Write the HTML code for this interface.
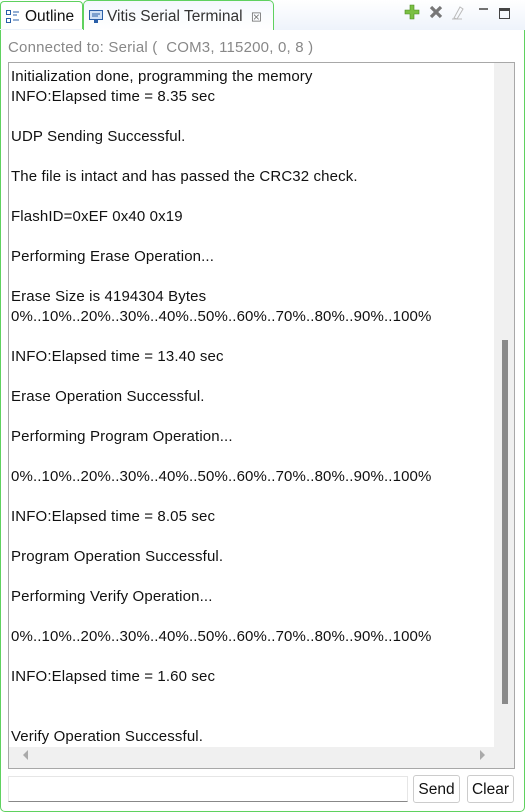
<!DOCTYPE html>
<html><head><style>
*{margin:0;padding:0;box-sizing:border-box}
body{width:525px;height:812px;background:#fff;font-family:"Liberation Sans","Noto Sans CJK SC",sans-serif;position:relative;overflow:hidden}
.frame{position:absolute;left:0;top:28px;width:525px;height:784px;border:1px solid #5fd15f;border-radius:0 0 5px 5px;background:#fff}
.tabbar{position:absolute;left:0;top:0;width:525px;height:30px;background:linear-gradient(#fff,#eef3fb)}
.tab1{position:absolute;left:0;top:1px;width:83px;height:28px;border:1px solid #5fd15f;border-bottom:none;border-radius:4px 4px 0 0;background:#fff;font-size:15.5px;color:#111;padding:6px 0 0 24px}
.tab2{position:absolute;left:83px;top:0;width:191px;height:30px;border:1px solid #5fd15f;border-bottom:none;border-radius:5px 5px 0 0;background:linear-gradient(#f4f8fd,#fff);font-size:15.5px;color:#333;padding:7px 0 0 23px}
.conn{position:absolute;left:8px;top:39px;font-size:15px;color:#888;letter-spacing:0.2px}
.box{position:absolute;left:8px;top:62px;width:507px;height:707px;border:1px solid #a8a8a8;background:#f0f0f0}
.text{position:absolute;left:0;top:0;width:485px;height:684px;background:#fff;overflow:hidden;font-size:15px;color:#111;line-height:20px;padding:4px 0 0 2px;white-space:pre;letter-spacing:0.13px}
.thumb{position:absolute;left:493px;top:277px;width:6px;height:364px;background:#8a8a8a}
.btn{position:absolute;top:775px;height:28px;border:1px solid #ccc;border-radius:3px;background:#fff;font-size:15.5px;text-align:center;line-height:27px;color:#111}
</style></head><body>
<div class="frame"></div>
<div class="tabbar"></div>
<div class="tab1">Outline
<svg style="position:absolute;left:5px;top:8px" width="14" height="14"><rect x="0.5" y="0.5" width="4" height="4" fill="none" stroke="#2a5fa8"/><rect x="0.5" y="8.5" width="4" height="4" fill="none" stroke="#2a5fa8"/><path d="M7 2h6M7 5h4M7 10h6" stroke="#2a5fa8"/></svg></div>
<div class="tab2">Vitis Serial Terminal <span style="font-size:11px;color:#666;margin-left:4px">⊠</span>
<svg style="position:absolute;left:5px;top:9px" width="14" height="14"><rect x="0.5" y="0.5" width="13" height="9" fill="#cfe0f5" stroke="#2a5fa8"/><path d="M3 4h8M3 6h6" stroke="#2a5fa8"/><rect x="5" y="10" width="4" height="3" fill="#2a5fa8"/></svg></div>
<svg style="position:absolute;left:404px;top:4px" width="110" height="18">
<path d="M6 1h4v5h5v4h-5v5h-4v-5h-5v-4h5z" fill="#7bc043" stroke="#4a8a20" stroke-width=".6"/>
<path d="M27 3l10 10M37 3l-10 10" stroke="#777" stroke-width="3.2"/>
<path d="M50 14l6-11 3 2-6 10z M48 15h10" stroke="#bbb" fill="none"/>
<path d="M75 5h9" stroke="#444" stroke-width="1.5"/>
<rect x="95.5" y="4.5" width="10" height="10" fill="none" stroke="#444"/><path d="M96 6h9" stroke="#444" stroke-width="2"/>
</svg>
<div class="conn">Connected to: Serial (&nbsp; COM3, 115200, 0, 8 )</div>
<div class="box"><div class="text">Initialization done, programming the memory
INFO:Elapsed time = 8.35 sec

UDP Sending Successful.

The file is intact and has passed the CRC32 check.

FlashID=0xEF 0x40 0x19

Performing Erase Operation...

Erase Size is 4194304 Bytes
0%..10%..20%..30%..40%..50%..60%..70%..80%..90%..100%

INFO:Elapsed time = 13.40 sec

Erase Operation Successful.

Performing Program Operation...

0%..10%..20%..30%..40%..50%..60%..70%..80%..90%..100%

INFO:Elapsed time = 8.05 sec

Program Operation Successful.

Performing Verify Operation...

0%..10%..20%..30%..40%..50%..60%..70%..80%..90%..100%

INFO:Elapsed time = 1.60 sec


Verify Operation Successful.</div>
<div class="thumb"></div>
<svg style="position:absolute;left:13px;top:686px" width="8" height="12"><path d="M6 1v10L1 6z" fill="#aaa"/></svg>
<svg style="position:absolute;left:469px;top:686px" width="8" height="12"><path d="M2 1v10l5-5z" fill="#aaa"/></svg>
</div>
<div style="position:absolute;left:8px;top:776px;width:400px;height:26px;border:1px solid #e6e6e6;border-bottom:1px solid #888"></div>
<div class="btn" style="left:413px;width:47px">Send</div>
<div class="btn" style="left:467px;width:47px">Clear</div>
</body></html>
